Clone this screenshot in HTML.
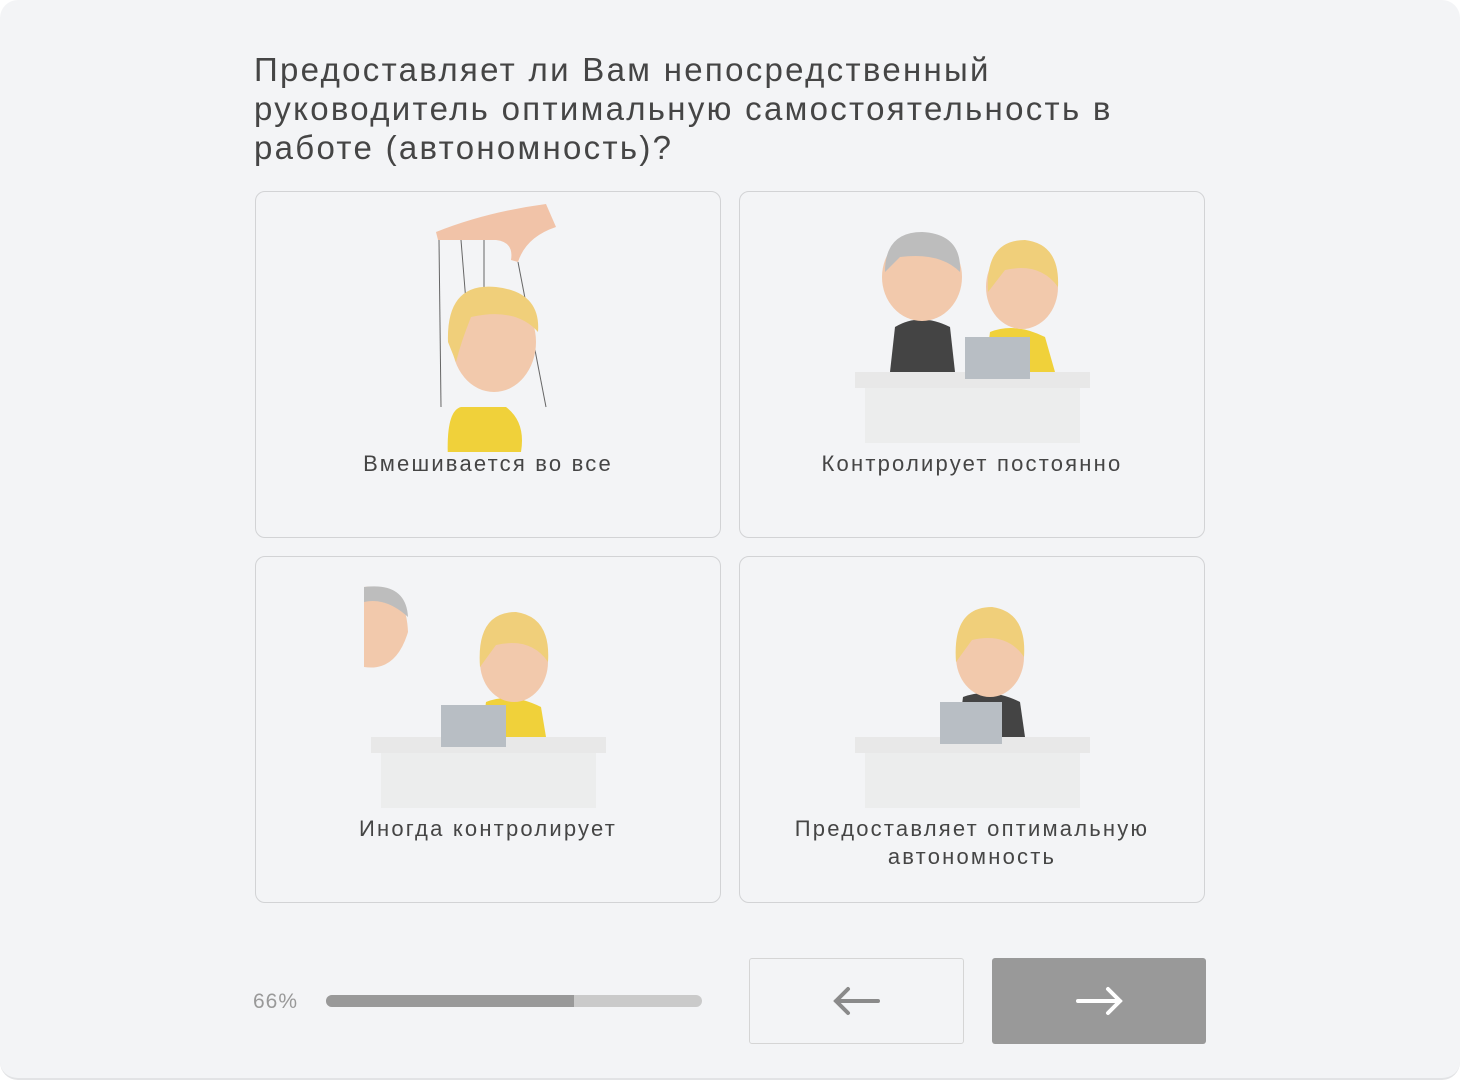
<!DOCTYPE html>
<html><head><meta charset="utf-8"><style>
html,body{margin:0;padding:0;background:#fff;}
.page{position:absolute;left:0;top:0;width:1460px;height:1078px;background:#f3f4f6;border-radius:18px;overflow:hidden;border-bottom:2px solid #e2e3e5;font-family:"Liberation Sans",sans-serif;color:#444;}
h1{position:absolute;left:254px;top:50px;margin:0;font-weight:normal;font-size:33px;line-height:39px;width:1000px;color:#454545;letter-spacing:2.3px;white-space:nowrap;}
.card{position:absolute;width:466px;height:347px;border:1.5px solid #d2d3d5;border-radius:10px;box-sizing:border-box;}
.lbl{position:absolute;left:0;right:0;text-align:center;font-size:22px;line-height:28px;color:#454545;letter-spacing:2.2px;}
svg{position:absolute;}
.pct{position:absolute;left:253px;top:990px;font-size:21px;color:#999;letter-spacing:1px;}
.bar{position:absolute;left:326px;top:995px;width:376px;height:12px;border-radius:6px;background:#cacaca;overflow:hidden;}
.bar div{width:248px;height:100%;background:#999;}
.b1{position:absolute;left:749px;top:958px;width:215px;height:86px;border:1px solid #d5d5d5;border-radius:3px;box-sizing:border-box;}
.b2{position:absolute;left:992px;top:958px;width:214px;height:86px;background:#999;border-radius:3px;}
</style></head><body><div class="page">
<h1>Предоставляет ли Вам непосредственный<br>руководитель оптимальную самостоятельность в<br>работе (автономность)?</h1>

<div class="card" style="left:255px;top:191px">
<svg width="464" height="260" viewBox="0 0 464 260">
<path d="M180 40 Q230 20 290 12 L300 35 Q270 45 262 70 L255 68 Q258 50 240 48 L182 48 Z" fill="#f1c3a8"/>
<g stroke="#666" stroke-width="1"><line x1="183" y1="48" x2="185" y2="215"/><line x1="205" y1="48" x2="210" y2="110"/><line x1="228" y1="48" x2="228" y2="100"/><line x1="262" y1="70" x2="290" y2="215"/></g>
<path d="M195 300 Q185 220 205 215 L250 215 Q270 230 265 260 Z" fill="#f0d13a"/>
<ellipse cx="238" cy="150" rx="42" ry="50" fill="#f2c9ac"/>
<path d="M192 150 Q190 90 240 95 Q285 100 282 140 Q260 115 215 125 Q205 150 200 170 Z" fill="#f0cf7a"/>
</svg>
<div class="lbl" style="top:258px">Вмешивается во все</div></div>

<div class="card" style="left:739px;top:191px">
<svg width="464" height="260" viewBox="0 0 464 260">
<rect x="115" y="180" width="235" height="16" fill="#e8e8e8"/><rect x="125" y="196" width="215" height="55" fill="#eceded"/>
<path d="M150 180 L155 135 Q180 120 210 135 L215 180 Z" fill="#444"/>
<ellipse cx="182" cy="85" rx="40" ry="44" fill="#f2c9ac"/>
<path d="M145 80 Q145 40 182 40 Q222 42 220 80 Q200 60 160 65 Z" fill="#bdbdbd"/>
<path d="M245 180 L250 140 Q275 130 305 145 L315 180 Z" fill="#f0d13a"/>
<ellipse cx="282" cy="95" rx="36" ry="42" fill="#f2c9ac"/>
<path d="M248 100 Q245 48 285 48 Q320 52 318 95 Q300 70 265 78 Z" fill="#f0cf7a"/>
<rect x="225" y="145" width="65" height="42" fill="#b8bec4"/>
</svg>
<div class="lbl" style="top:258px">Контролирует постоянно</div></div>

<div class="card" style="left:255px;top:556px">
<svg width="464" height="260" viewBox="0 0 464 260">
<rect x="115" y="180" width="235" height="16" fill="#e8e8e8"/><rect x="125" y="196" width="215" height="55" fill="#eceded"/>
<path d="M108 30 Q150 25 152 75 Q140 115 108 110 Z" fill="#f2c9ac"/>
<path d="M108 30 Q150 25 152 60 Q130 40 108 45 Z" fill="#bdbdbd"/>
<path d="M225 180 L230 145 Q255 135 285 150 L290 180 Z" fill="#f0d13a"/>
<ellipse cx="258" cy="105" rx="34" ry="40" fill="#f2c9ac"/>
<path d="M224 110 Q220 55 260 55 Q295 60 292 105 Q275 80 240 88 Z" fill="#f0cf7a"/>
<rect x="185" y="148" width="65" height="42" fill="#b8bec4"/>
</svg>
<div class="lbl" style="top:258px">Иногда контролирует</div></div>

<div class="card" style="left:739px;top:556px">
<svg width="464" height="260" viewBox="0 0 464 260">
<rect x="115" y="180" width="235" height="16" fill="#e8e8e8"/><rect x="125" y="196" width="215" height="55" fill="#eceded"/>
<path d="M218 180 L223 140 Q250 130 280 145 L285 180 Z" fill="#444"/>
<ellipse cx="250" cy="100" rx="34" ry="40" fill="#f2c9ac"/>
<path d="M216 105 Q212 50 252 50 Q287 55 284 100 Q267 75 232 83 Z" fill="#f0cf7a"/>
<rect x="200" y="145" width="62" height="42" fill="#b8bec4"/>
</svg>
<div class="lbl" style="top:258px">Предоставляет оптимальную<br>автономность</div></div>

<div class="pct">66%</div>
<div class="bar"><div></div></div>
<div class="b1"><svg width="215" height="86" style="left:0;top:0"><path d="M86 42 H128 M98 30 L86 42 L98 54" stroke="#8a8a8a" stroke-width="4" fill="none" stroke-linecap="round"/></svg></div>
<div class="b2"><svg width="214" height="86" style="left:0;top:0"><path d="M86 43 H128 M116 31 L128 43 L116 55" stroke="#fff" stroke-width="4" fill="none" stroke-linecap="round"/></svg></div>
</div></body></html>
